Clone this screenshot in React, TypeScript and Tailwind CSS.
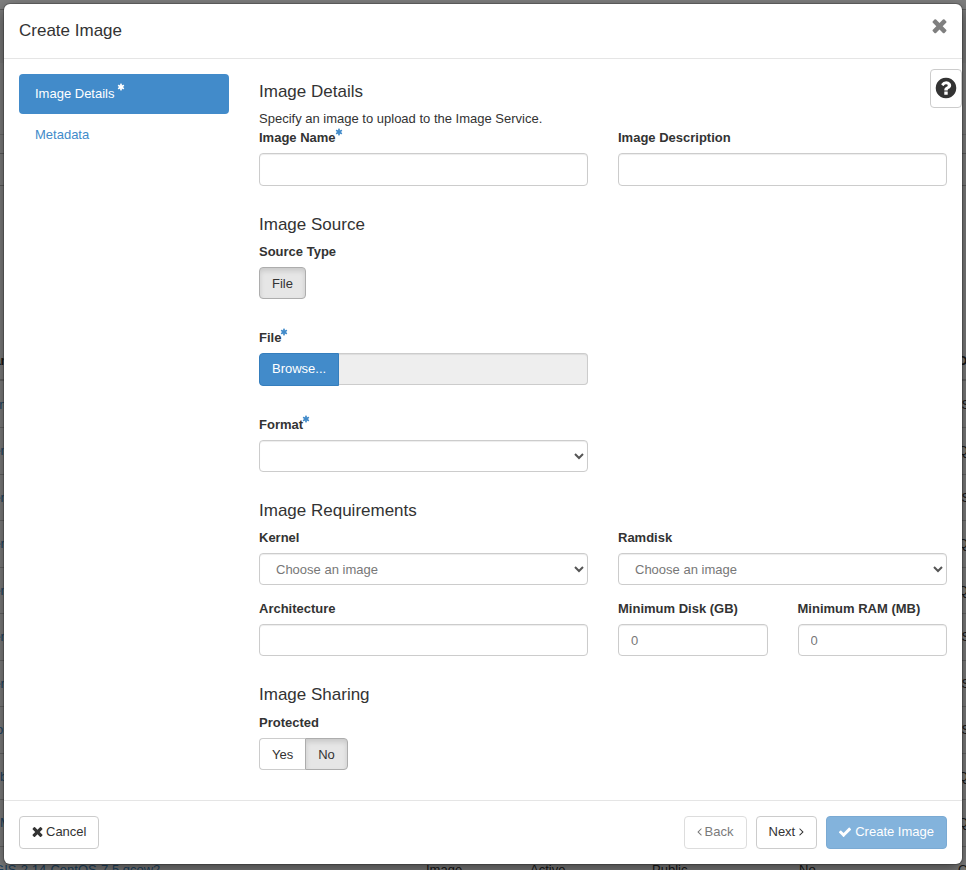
import { useState } from 'react';
import type { ReactNode } from 'react';

const PATHS = {
    times: 'M1490 1322q0 40-28 68l-136 136q-28 28-68 28t-68-28l-294-294-294 294q-28 28-68 28t-68-28l-136-136q-28-28-28-68t28-68l294-294-294-294q-28-28-28-68t28-68l136-136q28-28 68-28t68 28l294 294 294-294q28-28 68-28t68 28l136 136q28 28 28 68t-28 68l-294 294 294 294q28 28 28 68z',
    check: 'M1671 566q0 40-28 68l-724 724-136 136q-28 28-68 28t-68-28l-136-136-362-362q-28-28-28-68t28-68l136-136q28-28 68-28t68 28l294 295 656-657q28-28 68-28t68 28l136 136q28 28 28 68z',
    left: 'M1203 544q0 13-10 23l-393 393 393 393q10 10 10 23t-10 23l-50 50q-10 10-23 10t-23-10l-466-466q-10-10-10-23t10-23l466-466q10-10 23-10t23 10l50 50q10 10 10 23z',
    right: 'M1171 960q0 13-10 23l-466 466q-10 10-23 10t-23-10l-50-50q-10-10-10-23t10-23l393-393-393-393q-10-10-10-23t10-23l50-50q10-10 23-10t23 10l466 466q10 10 10 23z',
    question: 'M1024 1376v-192q0-14-9-23t-23-9h-192q-14 0-23 9t-9 23v192q0 14 9 23t23 9h192q14 0 23-9t9-23zm256-672q0-88-55.5-163t-138.5-116-170-41q-243 0-371 213-15 24 8 42l132 100q7 6 19 6 16 0 25-12 53-68 86-92 34-24 86-24 48 0 85.5 26t37.5 59q0 38-20 61t-68 45q-63 28-115.5 86.5t-52.5 125.5v36q0 14 9 23t23 9h192q14 0 23-9t9-23q0-19 21.5-49.5t54.5-49.5q32-18 49-28.5t46-35 44.5-48 28-60.5 12.5-81zm384 192q0 209-103 385.5t-279.5 279.5-385.5 103-385.5-103-279.5-279.5-103-385.5 103-385.5 279.5-279.5 385.5-103 385.5 103 279.5 279.5 103 385.5z',
    asterisk: 'M1546 1050q46 26 59.5 77.5t-12.5 97.5l-64 110q-26 46-77.5 59.5t-97.5-12.5l-266-153v307q0 52-38 90t-90 38h-128q-52 0-90-38t-38-90v-307l-266 153q-46 26-97.5 12.5t-77.5-59.5l-64-110q-26-46-12.5-97.5t59.5-77.5l266-154-266-154q-46-26-59.5-77.5t12.5-97.5l64-110q26-46 77.5-59.5t97.5 12.5l266 153v-307q0-52 38-90t90-38h128q52 0 90 38t38 90v307l266-153q46-26 97.5-12.5t77.5 59.5l64 110q26 46 12.5 97.5t-59.5 77.5l-266 154z',
};

function Icon({ name, className }: { name: keyof typeof PATHS; className: string }) {
    return (
        <svg viewBox="0 0 1792 1792" fill="currentColor" aria-hidden="true" className={className}>
            <path d={PATHS[name]} />
        </svg>
    );
}

// Images listed on the page under the dialog
const images = [
    { name: 'Win', format: 'ISO' },
    { name: 'Cen', format: 'QCOW2' },
    { name: 'Cen', format: 'ISO' },
    { name: 'Cen', format: 'QCOW2' },
    { name: 'Cen', format: 'QCOW2' },
    { name: 'Cen', format: 'ISO' },
    { name: 'Cen', format: 'ISO' },
    { name: 'Wo', format: 'ISO' },
    { name: 'Xub', format: 'QCOW2' },
    { name: 'CsM', format: 'QCOW2' },
    { name: 'QGIS-2.14-CentOS-7.5.qcow2', format: 'QCOW2' },
];

function ImagesPage() {
    return (
        <div aria-hidden="true" className="absolute inset-0 overflow-hidden bg-white">
            <div className="h-[10px] border-b border-[#bbb]" />
            <div className="h-[53px] bg-[#f5f5f5]" />
            <div className="h-[72px] border-b border-[#ddd]" />
            <div className="h-[19px] border-b border-[#bbb]" />
            <div className="h-8 border-b border-[#bbb]" />
            <table className="-ml-4 mt-[156px] h-[551px] w-[1100px] table-fixed border-collapse text-left whitespace-nowrap">
                <colgroup>
                    <col className="w-[442px]" />
                    <col className="w-[104px]" />
                    <col className="w-[122px]" />
                    <col className="w-[147px]" />
                    <col className="w-[159px]" />
                    <col />
                </colgroup>
                <thead>
                    <tr className="h-[38px] border-b-2 border-[#ccc]">
                        <th>Name</th>
                        <th>Type</th>
                        <th>Status</th>
                        <th>Visibility</th>
                        <th>Protected</th>
                        <th>Disk Format</th>
                    </tr>
                </thead>
                <tbody>
                    {images.map((image, i) => (
                        <tr key={i} className="border-b border-[#ccc]">
                            <td className="text-[#428bca]">{image.name}</td>
                            <td>Image</td>
                            <td>Active</td>
                            <td>Public</td>
                            <td>No</td>
                            <td>{image.format}</td>
                        </tr>
                    ))}
                </tbody>
            </table>
        </div>
    );
}

function Label({ id, required, children }: { id: string; required?: boolean; children: ReactNode }) {
    return (
        <label htmlFor={id} className="mb-[6px] flex h-[19px] items-center font-bold">
            {children}
            {required && <Icon name="asterisk" className="-ml-px mb-3 h-2 w-2 text-[#428bca]" />}
        </label>
    );
}

const control =
    'block h-8 w-full rounded-[4px] border border-[#ccc] bg-white px-3 text-[#555] placeholder:text-[#777] shadow-[inset_0_1px_1px_rgba(0,0,0,0.075)]';

function Select({ id, placeholder }: { id: string; placeholder?: string }) {
    return (
        <div className="relative">
            <select id={id} defaultValue="" className={`${control} appearance-none pl-4 text-[#777]`}>
                <option value="">{placeholder}</option>
            </select>
            <svg viewBox="0 0 10 8" aria-hidden="true" className="pointer-events-none absolute top-3 right-1 h-2 w-[10px] text-[#555]">
                <path d="M1 2l4 4 4-4" fill="none" stroke="currentColor" strokeWidth="2" />
            </svg>
        </div>
    );
}

const button = 'flex h-[33px] items-center rounded-[4px] border border-[#ccc] bg-white px-3 pb-[2px]';
const pressed = 'border-[#adadad] bg-[#e6e6e6] shadow-[inset_0_3px_5px_rgba(0,0,0,0.125)]';

export default function App() {
    const [isProtected, setIsProtected] = useState(false);

    return (
        <div className="relative min-h-screen overflow-hidden font-['Liberation_Sans',Arial,sans-serif] text-[13px] leading-[19px] text-[#333]">
            <ImagesPage />
            <div className="absolute inset-0 bg-black/50" />

            <div
                role="dialog"
                aria-labelledby="dialog-title"
                className="relative mx-1 mt-1 mb-[6px] rounded-[6px] bg-white shadow-[0_0_0_1px_rgba(0,0,0,0.2),0_5px_15px_rgba(0,0,0,0.5)]"
            >
                <header className="flex h-[55px] items-start justify-between border-b border-[#e5e5e5] px-[15px] pt-[15px]">
                    <h1 id="dialog-title" className="text-[17px] leading-6">Create Image</h1>
                    <button aria-label="Close" className="-mt-1 -mr-[3px] text-[#7f7f7f]">
                        <Icon name="times" className="h-[21px] w-[21px]" />
                    </button>
                </header>

                <div className="relative flex gap-[30px] px-[15px] pt-[15px] pb-[30px]">
                    <nav className="flex w-[210px] shrink-0 flex-col gap-[2px]">
                        <a href="#details" className="flex h-10 items-center gap-[3px] rounded-[4px] bg-[#428bca] px-4 pb-[2px] text-white">
                            Image Details
                            <Icon name="asterisk" className="mb-3 h-2 w-2" />
                        </a>
                        <a href="#metadata" className="flex h-[38px] items-center px-4 pb-[2px] text-[#428bca]">Metadata</a>
                    </nav>

                    <form id="details" className="min-w-0 flex-1" onSubmit={(e) => e.preventDefault()}>
                        <h2 className="mt-[6px] text-[17px] leading-6">Image Details</h2>
                        <p className="mt-[6px] leading-[18px]">Specify an image to upload to the Image Service.</p>
                        <div className="grid grid-cols-2 gap-x-[30px]">
                            <div>
                                <Label id="name" required>Image Name</Label>
                                <input id="name" type="text" className={`${control} h-[33px]`} />
                            </div>
                            <div>
                                <Label id="description">Image Description</Label>
                                <input id="description" type="text" className={`${control} h-[33px]`} />
                            </div>
                        </div>

                        <h2 className="mt-[27px] mb-[5px] text-[17px] leading-6">Image Source</h2>
                        <div className="grid grid-cols-2 gap-x-[30px]">
                            <div>
                                <Label id="source-file">Source Type</Label>
                                <button id="source-file" type="button" className={`flex h-8 items-center rounded-[4px] border px-3 ${pressed}`}>
                                    File
                                </button>

                                <div className="mt-[29px]">
                                    <Label id="file" required>File</Label>
                                    <div className="flex">
                                        <button type="button" className="h-[33px] rounded-l-[4px] border border-[#357ebd] bg-[#428bca] px-3 pb-[2px] text-white">
                                            Browse...
                                        </button>
                                        <input
                                            id="file"
                                            type="text"
                                            readOnly
                                            className="h-8 min-w-0 flex-1 rounded-r-[4px] border border-l-0 border-[#ccc] bg-[#eee] px-3 shadow-[inset_0_1px_1px_rgba(0,0,0,0.075)]"
                                        />
                                    </div>
                                </div>

                                <div className="mt-[29px]">
                                    <Label id="format" required>Format</Label>
                                    <Select id="format" />
                                </div>
                            </div>
                        </div>

                        <h2 className="mt-[27px] mb-[5px] text-[17px] leading-6">Image Requirements</h2>
                        <div className="grid grid-cols-2 gap-x-[30px] gap-y-[14px]">
                            <div>
                                <Label id="kernel">Kernel</Label>
                                <Select id="kernel" placeholder="Choose an image" />
                            </div>
                            <div>
                                <Label id="ramdisk">Ramdisk</Label>
                                <Select id="ramdisk" placeholder="Choose an image" />
                            </div>
                            <div>
                                <Label id="architecture">Architecture</Label>
                                <input id="architecture" type="text" className={control} />
                            </div>
                            <div className="grid grid-cols-2 gap-x-[30px]">
                                <div>
                                    <Label id="min-disk">Minimum Disk (GB)</Label>
                                    <input id="min-disk" type="text" placeholder="0" className={control} />
                                </div>
                                <div>
                                    <Label id="min-ram">Minimum RAM (MB)</Label>
                                    <input id="min-ram" type="text" placeholder="0" className={control} />
                                </div>
                            </div>
                        </div>

                        <h2 className="mt-[27px] mb-[6px] text-[17px] leading-6">Image Sharing</h2>
                        <Label id="protected-yes">Protected</Label>
                        <div className="flex">
                            <button
                                id="protected-yes"
                                type="button"
                                onClick={() => setIsProtected(true)}
                                className={`flex h-8 items-center rounded-l-[4px] border border-r-0 px-3 ${isProtected ? pressed : 'border-[#ccc]'}`}
                            >
                                Yes
                            </button>
                            <button
                                type="button"
                                onClick={() => setIsProtected(false)}
                                className={`flex h-8 items-center rounded-r-[4px] border px-3 ${isProtected ? 'border-[#ccc]' : pressed}`}
                            >
                                No
                            </button>
                        </div>
                    </form>

                    <button aria-label="Help" className="absolute top-[10px] right-0 flex h-[39px] w-8 items-center justify-center rounded-[4px] border border-[#ccc] bg-white pb-[2px]">
                        <Icon name="question" className="h-6 w-6 shrink-0" />
                    </button>
                </div>

                <footer className="flex items-center gap-[9px] border-t border-[#e5e5e5] p-[15px]">
                    <button className={`${button} mr-auto gap-[3px]`}>
                        <Icon name="times" className="-mx-[2px] h-[15px] w-[15px]" />
                        Cancel
                    </button>
                    <button disabled className={`${button} gap-[3px] opacity-65`}>
                        <Icon name="left" className="-mx-1 h-[13px] w-[13px]" />
                        Back
                    </button>
                    <button className={`${button} gap-1`}>
                        Next
                        <Icon name="right" className="-mx-1 h-[13px] w-[13px]" />
                    </button>
                    <button disabled className="flex h-[33px] items-center gap-1 rounded-[4px] border border-[#357ebd] bg-[#428bca] px-3 pb-[2px] text-white opacity-65">
                        <Icon name="check" className="-mx-px h-[14px] w-[14px]" />
                        Create Image
                    </button>
                </footer>
            </div>
        </div>
    );
}
